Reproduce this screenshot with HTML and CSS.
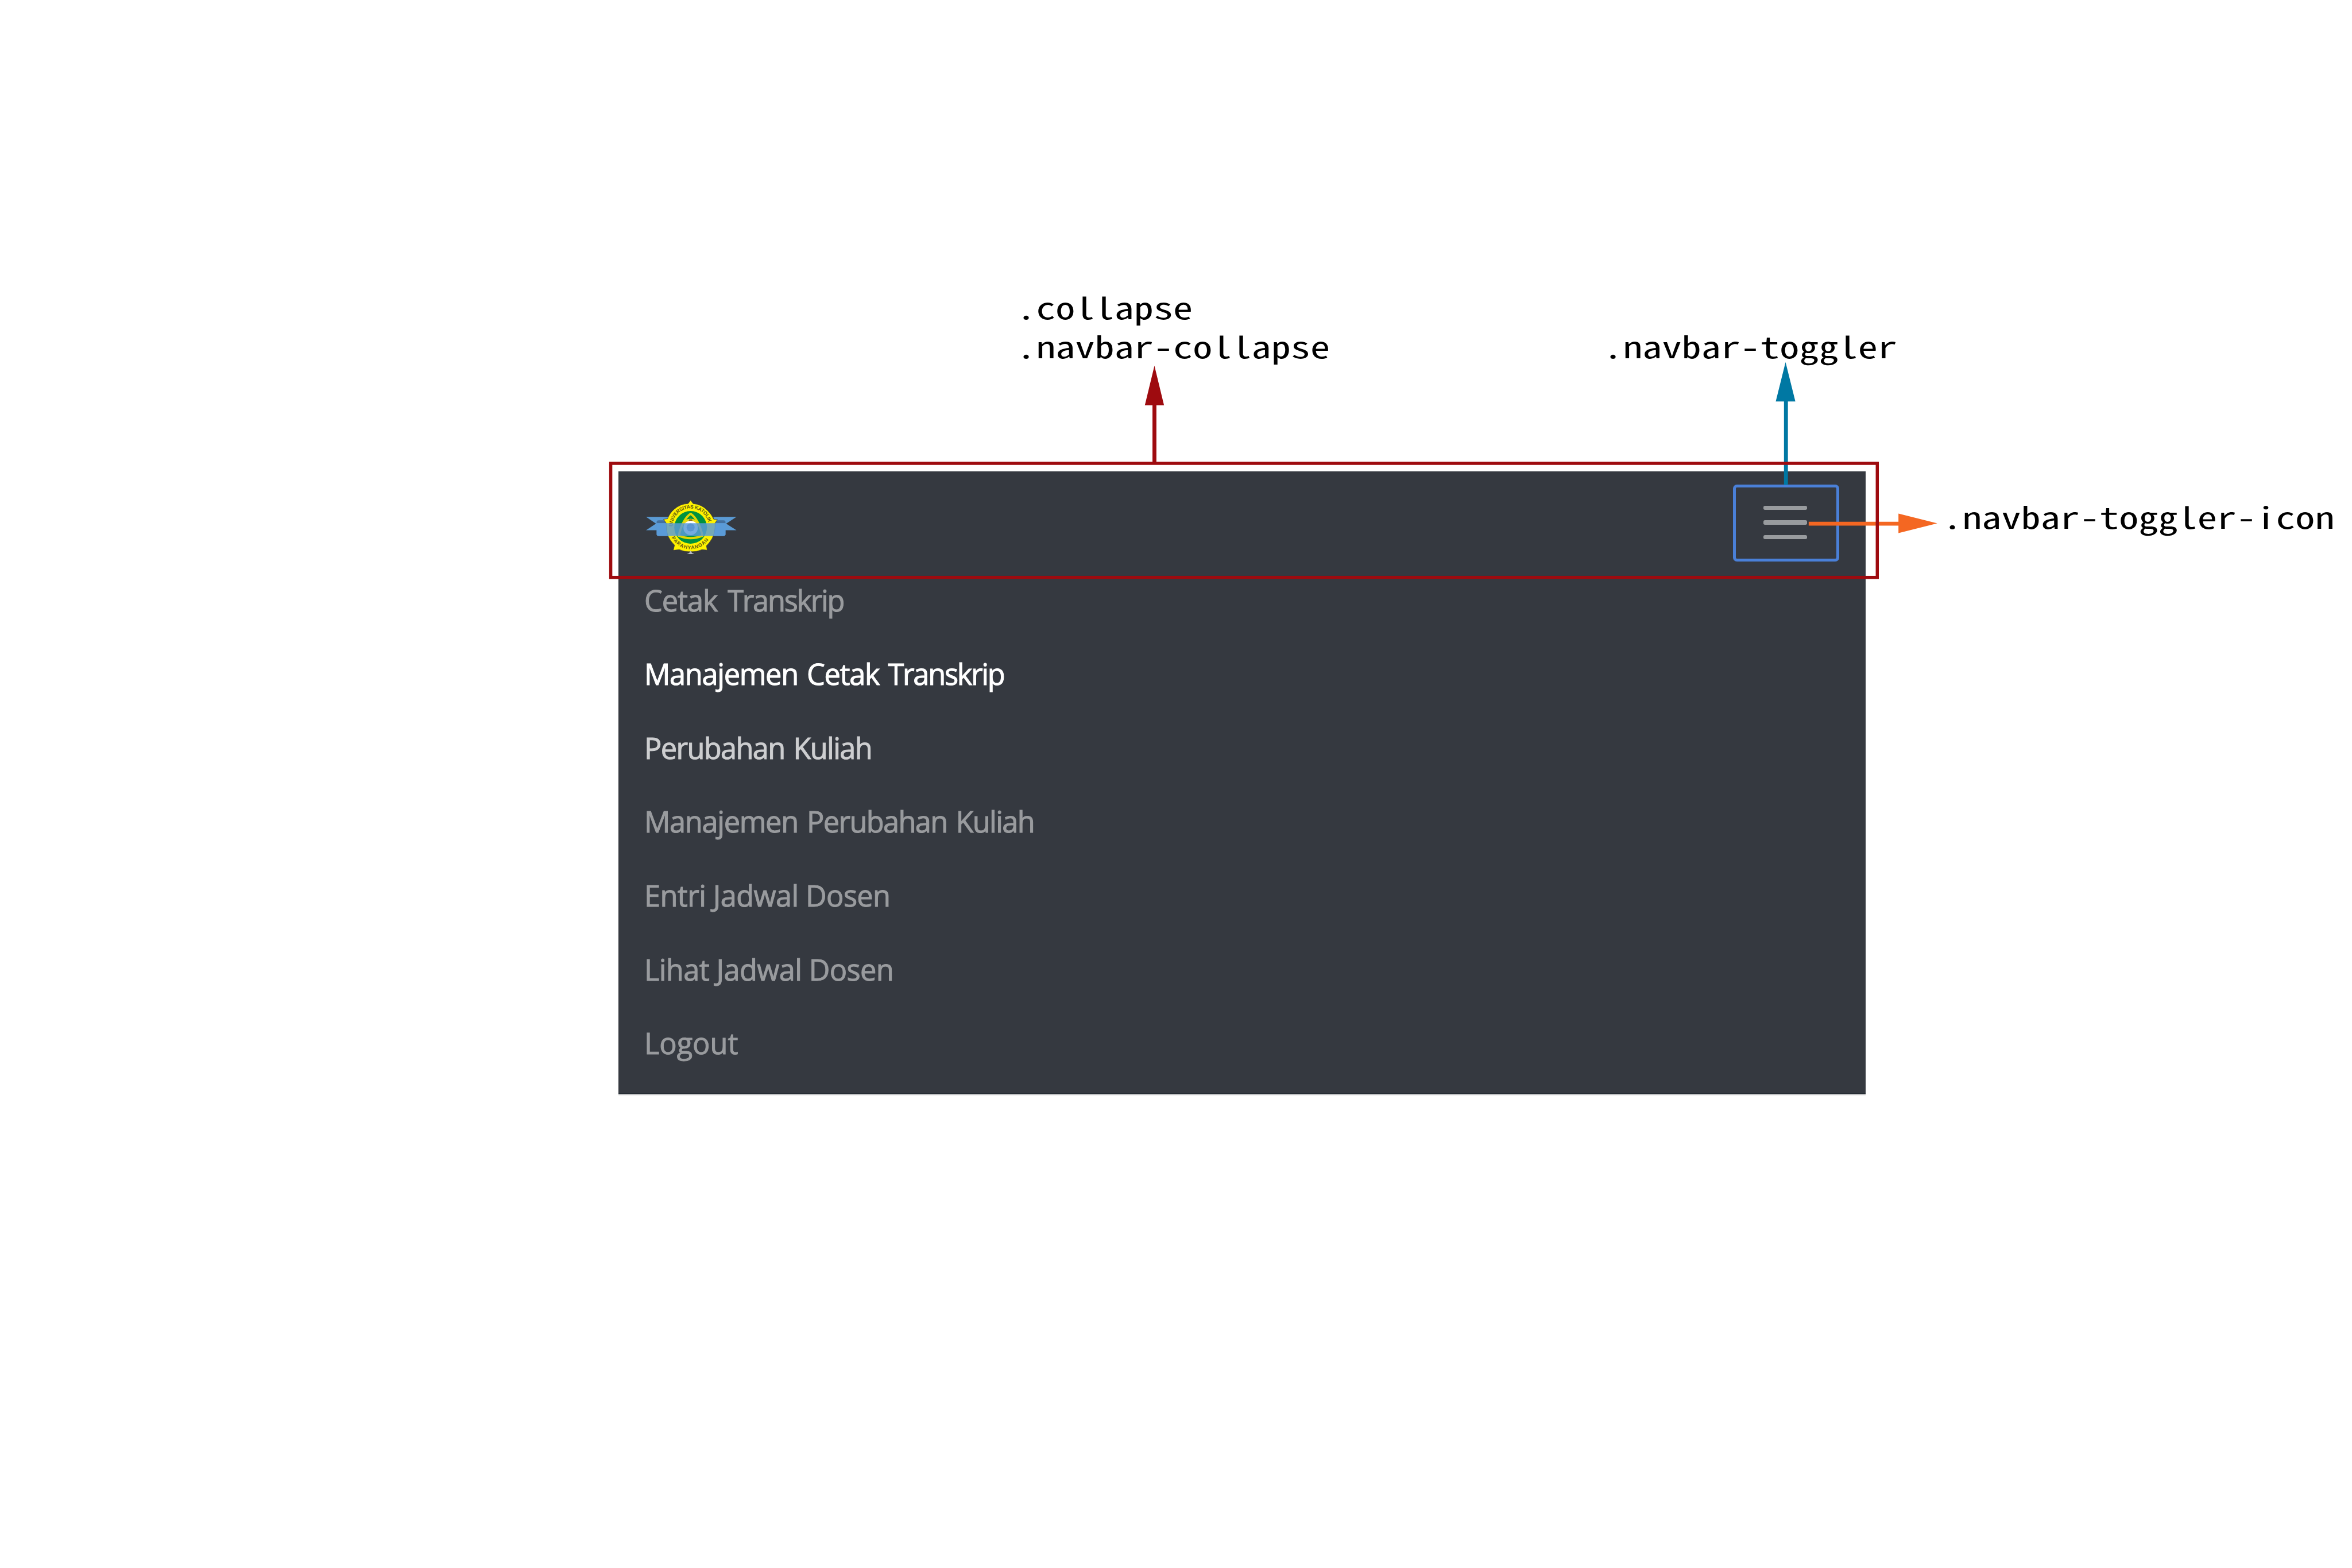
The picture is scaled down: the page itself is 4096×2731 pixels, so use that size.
FILE: index.html
```html
<!DOCTYPE html>
<html lang="id">
<head>
<meta charset="utf-8">
<title>Navbar</title>
<link rel="stylesheet" href="styles.css">
</head>
<body>
<main class="canvas">
  <nav class="navbar">
    <header class="navbar-header">
      <svg class="brand" viewBox="0 0 840 570">
        <defs>
          <path id="arc-top" d="M286 282A139 139 0 0 1 564 282"/>
          <path id="arc-bottom" d="M262 320A166 166 0 0 0 588 320"/>
        </defs>
        <g fill="#5b9bd5">
          <path d="M84 208H260V310H84L160 259Z"/>
          <path d="M776 208H600V310H776L697 259Z"/>
          <path d="M165 256H692V340Q692 354 676 354H181Q165 354 165 340Z"/>
        </g>
        <path d="M165 256V248Q165 234 181 234H240V256ZM692 256V248Q692 234 676 234H610V256Z" fill="#44719f"/>
        <path d="M425 80L444 106Q510 112 556 160Q588 192 602 226L630 228L612 256Q616 320 590 372Q566 412 546 428L552 462L512 458Q470 478 425 474Q380 478 338 458L292 464L302 424Q268 392 250 350Q236 310 238 256L218 226L248 222Q264 180 298 150Q346 108 406 106Z" fill="#fff200" stroke="#29283a" stroke-width="3"/>
        <circle cx="425" cy="288" r="125" fill="#00913f"/>
        <path d="M425 184Q365 224 334 352Q425 388 516 352Q485 224 425 184Z" fill="none" stroke="#e3d500" stroke-width="17" stroke-linejoin="round"/>
        <path d="M370 252Q374 226 425 222Q476 226 480 252L470 300H380Z" fill="#e8dc10"/>
        <path d="M410 240L414 226H436L440 240Z" fill="#8a6a10"/>
        <circle cx="425" cy="292" r="55" fill="#fff"/>
        <circle cx="425" cy="288" r="31" fill="#6c85b4"/>
        <path d="M402 276Q425 262 448 276M398 292H452M404 308Q425 320 446 308" fill="none" stroke="#3e5f9a" stroke-width="7"/>
        <g class="seal">
          <text><textPath href="#arc-top" textLength="405">UNIVERSITAS KATOLIK</textPath></text>
          <text><textPath href="#arc-bottom" startOffset="50" textLength="340">PARAHYANGAN</textPath></text>
        </g>
        <path d="M425 466L436 484L454 492H396L414 484Z" fill="#b9bcc4"/>
        <path d="M165 256H692V340Q692 354 676 354H181Q165 354 165 340Z" fill="#5b9bd9" fill-opacity=".84"/>
      </svg>
      <button class="navbar-toggler" type="button">
        <span class="bar"></span><span class="bar"></span><span class="bar"></span>
      </button>
    </header>
    <ul class="navbar-nav">
      <li class="nav-item snug">Cetak <span class="narrow">Transkrip</span></li>
      <li class="nav-item tight active">Manajemen Cetak <span class="narrow">Transkrip</span></li>
      <li class="nav-item tighter hover">Perubahan Kuliah</li>
      <li class="nav-item tight">Manajemen <span class="tighter">Perubahan Kuliah</span></li>
      <li class="nav-item loose">Entri Jadwal Dosen</li>
      <li class="nav-item loose">Lihat Jadwal Dosen</li>
      <li class="nav-item">Logout</li>
    </ul>
  </nav>

  <svg class="arrows" viewBox="0 0 6000 4000" preserveAspectRatio="none">
    <path d="M4555 924L4580 1024H4561V1237H4551V1024H4530Z" fill="#0078a3"/>
    <path d="M4614 1331H4843V1310L4942 1335L4843 1360V1341H4614Z" fill="#f46722"/>
    <path d="M2945 933L2969.500 1034H2950V1180H2940V1034H2920.500Z" fill="#9e0b0f"/>
    <rect x="1558" y="1182" width="3231" height="291" fill="none" stroke="#9e0b0f" stroke-width="8"/>
  </svg>

  <p class="label label-collapse">.collapse<br>.navbar-collapse</p>
  <p class="label label-toggler">.navbar-toggler</p>
  <p class="label label-icon">.navbar-toggler-icon</p>
</main>
</body>
</html>
```
FILE: styles.css
```css
:root {
  --u: calc(100vw / 6000);
}

* {
  box-sizing: border-box;
}

body {
  margin: 0;
  background: #fff;
}

.canvas {
  position: relative;
  width: 100vw;
  height: 100vh;
  overflow: hidden;
  padding: calc(1203 * var(--u)) 0 0 calc(1577 * var(--u));
}

.navbar {
  width: calc(3183 * var(--u));
  height: calc(1589 * var(--u));
  background: #353940;
  border-bottom: calc(4 * var(--u)) solid #262d34;
  box-shadow: 0 calc(3 * var(--u)) 0 #e6e6e6;
}

.navbar-header {
  display: flex;
  justify-content: space-between;
  align-items: flex-start;
  height: calc(235 * var(--u));
  padding: calc(33.5 * var(--u)) calc(68 * var(--u)) 0 calc(43 * var(--u));
}

.brand {
  width: calc(280 * var(--u));
  height: calc(190 * var(--u));
  margin-top: calc(13.5 * var(--u));
}

.seal {
  font: bold 38px "Liberation Sans", sans-serif;
  fill: #5f5a10;
}

.navbar-toggler {
  display: flex;
  flex-direction: column;
  align-items: center;
  justify-content: center;
  gap: calc(26.4 * var(--u));
  width: calc(271 * var(--u));
  height: calc(196 * var(--u));
  padding: 0 calc(4 * var(--u)) calc(3 * var(--u)) 0;
  border: calc(8 * var(--u)) solid #4a80d8;
  border-radius: calc(10 * var(--u));
  background: transparent;
}

.bar {
  width: calc(112 * var(--u));
  height: calc(10.6 * var(--u));
  border-radius: calc(4 * var(--u));
  background: #989b9e;
}

.navbar-nav {
  margin: 0;
  padding: 0 0 0 calc(66.5 * var(--u));
  list-style: none;
}

.nav-item {
  font: calc(74 * var(--u)) / calc(188.4 * var(--u)) "Open Sans", "Noto Sans", sans-serif;
  color: #999b9e;
  white-space: nowrap;
  -webkit-text-stroke: calc(1.5 * var(--u));
}

.snug {
  letter-spacing: calc(-1.5 * var(--u));
  word-spacing: calc(8 * var(--u));
}

.tight {
  letter-spacing: calc(-1.93 * var(--u));
  word-spacing: calc(5 * var(--u));
}

.tighter {
  letter-spacing: calc(-2.4 * var(--u));
  word-spacing: calc(5 * var(--u));
}

.narrow {
  letter-spacing: calc(-3.3 * var(--u));
}

.loose {
  letter-spacing: calc(-0.9 * var(--u));
}

.hover {
  color: #cdced0;
}

.active {
  color: #fff;
}

.arrows {
  position: absolute;
  inset: 0;
  width: 100%;
  height: 100%;
}

.label {
  position: absolute;
  margin: 0;
  font: calc(76 * var(--u)) / calc(100 * var(--u)) "Noto Sans Mono CJK SC", "Liberation Mono", monospace;
  color: #000;
  white-space: nowrap;
  transform: scaleX(1.3158);
  transform-origin: 0 0;
}

.label-collapse {
  left: calc(2592.5 * var(--u));
  top: calc(732.5 * var(--u));
}

.label-toggler {
  left: calc(4090.5 * var(--u));
  top: calc(832.5 * var(--u));
}

.label-icon {
  left: calc(4955 * var(--u));
  top: calc(1267.5 * var(--u));
}
```
